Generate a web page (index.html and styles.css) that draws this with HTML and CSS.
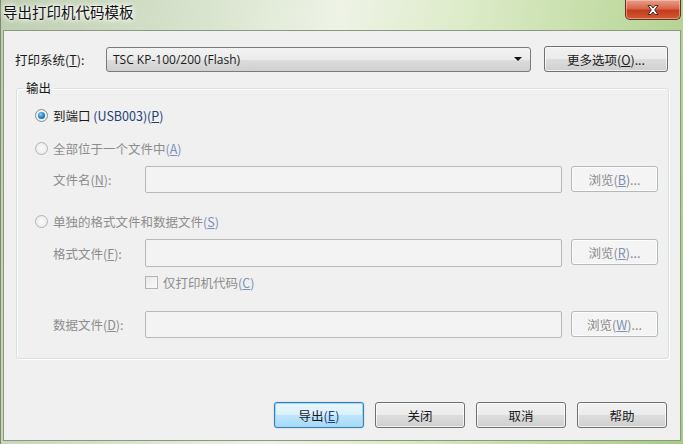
FILE: index.html
```html
<!DOCTYPE html>
<html lang="zh-CN">
<head>
  <meta charset="UTF-8">
  <title>导出打印机代码模板</title>
  <link rel="stylesheet" href="styles.css">
</head>
<body>
  <div class="window">
    <div class="titlebar">
      <span class="title">导出打印机代码模板</span>
      <div class="close-btn">
        <svg width="20" height="12" viewBox="0 0 20 12">
          <path d="M5 1.5 L8 1.5 L10 4 L12 1.5 L15 1.5 L11.7 6 L15 10.5 L12 10.5 L10 8 L8 10.5 L5 10.5 L8.3 6 Z" fill="#fff" stroke="#4a2a22" stroke-width="1" stroke-linejoin="round"/>
        </svg>
      </div>
    </div>

    <div class="client">
      <!-- 打印系统 -->
      <div class="system-row">
        <span class="label">打印系统(<u>T</u>):</span>
        <div class="combo">
          <span>TSC KP-100/200 (Flash)</span>
          <span class="arrow"></span>
        </div>
        <button class="btn more">更多选项(<u>O</u>)...</button>
      </div>

      <fieldset class="group">
        <legend>输出</legend>

        <div class="radio-row first">
          <span class="radio checked"></span>
          <span>到端口 <span class="blue">(USB003)(<u>P</u>)</span></span>
        </div>

        <div class="radio-row gap-a disabled">
          <span class="radio"></span>
          <span>全部位于一个文件中<span class="blue">(<u>A</u>)</span></span>
        </div>

        <div class="field-row row-file">
          <span class="field-label">文件名(<u>N</u>):</span>
          <div class="input"></div>
          <button class="btn browse" disabled>浏览(<u>B</u>)...</button>
        </div>

        <div class="radio-row gap-b disabled">
          <span class="radio"></span>
          <span>单独的格式文件和数据文件<span class="blue">(<u>S</u>)</span></span>
        </div>

        <div class="field-row row-format">
          <span class="field-label">格式文件(<u>F</u>):</span>
          <div class="input"></div>
          <button class="btn browse" disabled>浏览(<u>R</u>)...</button>
        </div>

        <div class="check-row disabled">
          <span class="checkbox"></span>
          <span>仅打印机代码<span class="blue">(<u>C</u>)</span></span>
        </div>

        <div class="field-row row-data">
          <span class="field-label">数据文件(<u>D</u>):</span>
          <div class="input"></div>
          <button class="btn browse" disabled>浏览(<u>W</u>)...</button>
        </div>
      </fieldset>

      <div class="actions">
        <button class="btn action default">导出<span class="blue">(<u>E</u>)</span></button>
        <button class="btn action">关闭</button>
        <button class="btn action">取消</button>
        <button class="btn action">帮助</button>
      </div>
    </div>
  </div>
</body>
</html>
```

FILE: styles.css
```css
* {
  box-sizing: border-box;
  margin: 0;
  padding: 0;
}

body {
  width: 683px;
  height: 444px;
  overflow: hidden;
  font-family: "Noto Sans CJK SC", "Noto Sans", sans-serif;
  font-size: 12px;
  color: #1a1a1a;
}

u {
  text-decoration: underline;
  text-underline-offset: 1px;
}

/* Fenster */
.window {
  width: 683px;
  height: 444px;
  background: linear-gradient(100deg, #bfcdb2 0%, #d6e2cb 25%, #eef3e6 45%, #dcebc8 62%, #bcd89c 85%, #a9ca86 100%);
  border-left: 1px solid #7d8a70;
  display: flex;
  flex-direction: column;
}

.titlebar {
  height: 30px;
  display: flex;
  justify-content: space-between;
  align-items: flex-start;
}

.title {
  font-size: 14.5px;
  line-height: 16px;
  margin: 4px 0 0 2px;
  color: #111;
  text-shadow: 0 0 6px #fff, 0 0 6px #fff, 0 0 3px #fff;
}

.close-btn {
  width: 56px;
  height: 20px;
  margin-right: 2px;
  border: 1px solid #6b2e22;
  border-top: none;
  border-radius: 0 0 5px 5px;
  background: linear-gradient(#e8a08c 0%, #d8654a 45%, #c43c1b 55%, #cf5a33 100%);
  box-shadow: inset 0 0 0 1px rgba(255, 210, 190, 0.5);
  display: flex;
  justify-content: center;
  align-items: center;
}

.client {
  margin: 0 2px 3px 2px;
  height: 411px;
  background: #f0f0f0;
  border: 1px solid #8b9883;
  display: flex;
  flex-direction: column;
}

/* Druckersystem */
.system-row {
  display: flex;
  align-items: center;
  margin-top: 15px;
  padding-left: 11px;
  height: 26px;
}

.system-row .label {
  width: 91px;
  font-size: 12.5px;
}

.combo {
  width: 425px;
  height: 25px;
  border: 1px solid #7a7a7a;
  border-radius: 3px;
  background: linear-gradient(#f3f3f3 0%, #ebebeb 50%, #dddddd 51%, #cfcfcf 100%);
  display: flex;
  align-items: center;
  justify-content: space-between;
  padding: 0 8px 0 6px;
  font-family: "Open Sans", "Noto Sans", sans-serif;
  font-size: 12px;
}

.arrow {
  width: 0;
  height: 0;
  border-left: 4px solid transparent;
  border-right: 4px solid transparent;
  border-top: 4px solid #111;
}

.btn {
  font-family: "Noto Sans CJK SC", "Noto Sans", sans-serif;
  font-size: 12.5px;
  color: #1a1a1a;
  border: 1px solid #707070;
  border-radius: 3px;
  background: linear-gradient(#f2f2f2 0%, #ebebeb 50%, #dddddd 51%, #cfcfcf 100%);
  box-shadow: inset 0 0 0 1px rgba(255, 255, 255, 0.7);
}

.more {
  width: 124px;
  height: 26px;
  margin-left: 13px;
}

/* Ausgabe-Gruppe */
.group {
  margin: 8px 11px 0 12px;
  height: 279px;
  border: 1px solid #d5dfe5;
  border-radius: 3px;
  box-shadow: inset 1px 1px 0 #fff, 1px 1px 0 #fff;
  padding: 0 0 0 18px;
}

.group legend {
  margin-left: -12px;
  padding: 0 3px;
  font-size: 12.5px;
  line-height: 16px;
}

.radio-row,
.check-row {
  display: flex;
  align-items: center;
  height: 16px;
  gap: 5px;
  font-size: 12.5px;
}

.radio-row.first { margin-top: 11px; }
.radio-row.gap-a { margin-top: 17px; }
.radio-row.gap-b { margin-top: 20px; }

.disabled { color: #8d8d8d; }

.blue { color: #233f78; }
.disabled .blue { color: #7d90b5; }

.radio {
  width: 13px;
  height: 13px;
  border-radius: 50%;
  border: 1px solid #b4b4b4;
  background: radial-gradient(circle, #fbfbfb 0%, #e6e6e6 100%);
  display: flex;
  justify-content: center;
  align-items: center;
}

.radio.checked {
  border-color: #8b8b8b;
}

.radio.checked::after {
  content: "";
  width: 7px;
  height: 7px;
  border-radius: 50%;
  background: radial-gradient(circle at 40% 35%, #8fd3ff 0%, #2a8ad4 45%, #0c4f8f 100%);
}

.field-row {
  display: flex;
  align-items: center;
  padding-left: 18px;
}

.row-file { margin-top: 10px; height: 27px; }
.row-format { margin-top: 10px; height: 28px; }
.row-data { margin-top: 21px; height: 27px; }

.field-label {
  width: 92px;
  color: #8d8d8d;
  font-size: 12.5px;
}

.input {
  width: 417px;
  height: 100%;
  border: 1px solid #b8b8b8;
  border-radius: 2px;
  background: #f3f3f3;
}

.browse {
  width: 87px;
  height: 26px;
  margin-left: 9px;
  align-self: flex-start;
  color: #8a8a8a;
  border-color: #b5b8ba;
  background: #f4f4f4;
}

.browse u { color: #7d90b5; }

.check-row {
  margin-top: 7px;
  padding-left: 110px;
}

.checkbox {
  width: 13px;
  height: 13px;
  border: 1px solid #b4b4b4;
  background: linear-gradient(135deg, #e9e9e9, #fafafa);
}

/* Schaltflächen */
.actions {
  display: flex;
  justify-content: flex-end;
  gap: 11px;
  margin-top: 43px;
  padding-right: 13px;
}

.action {
  width: 90px;
  height: 26px;
}

.action.default {
  border-color: #3c7fb1;
  box-shadow: inset 0 0 0 1px #9bd8f5, 0 0 1px #3c7fb1;
  background: linear-gradient(#eaf6fd 0%, #d9f0fc 50%, #bee6fd 51%, #a7d9f5 100%);
}
```
